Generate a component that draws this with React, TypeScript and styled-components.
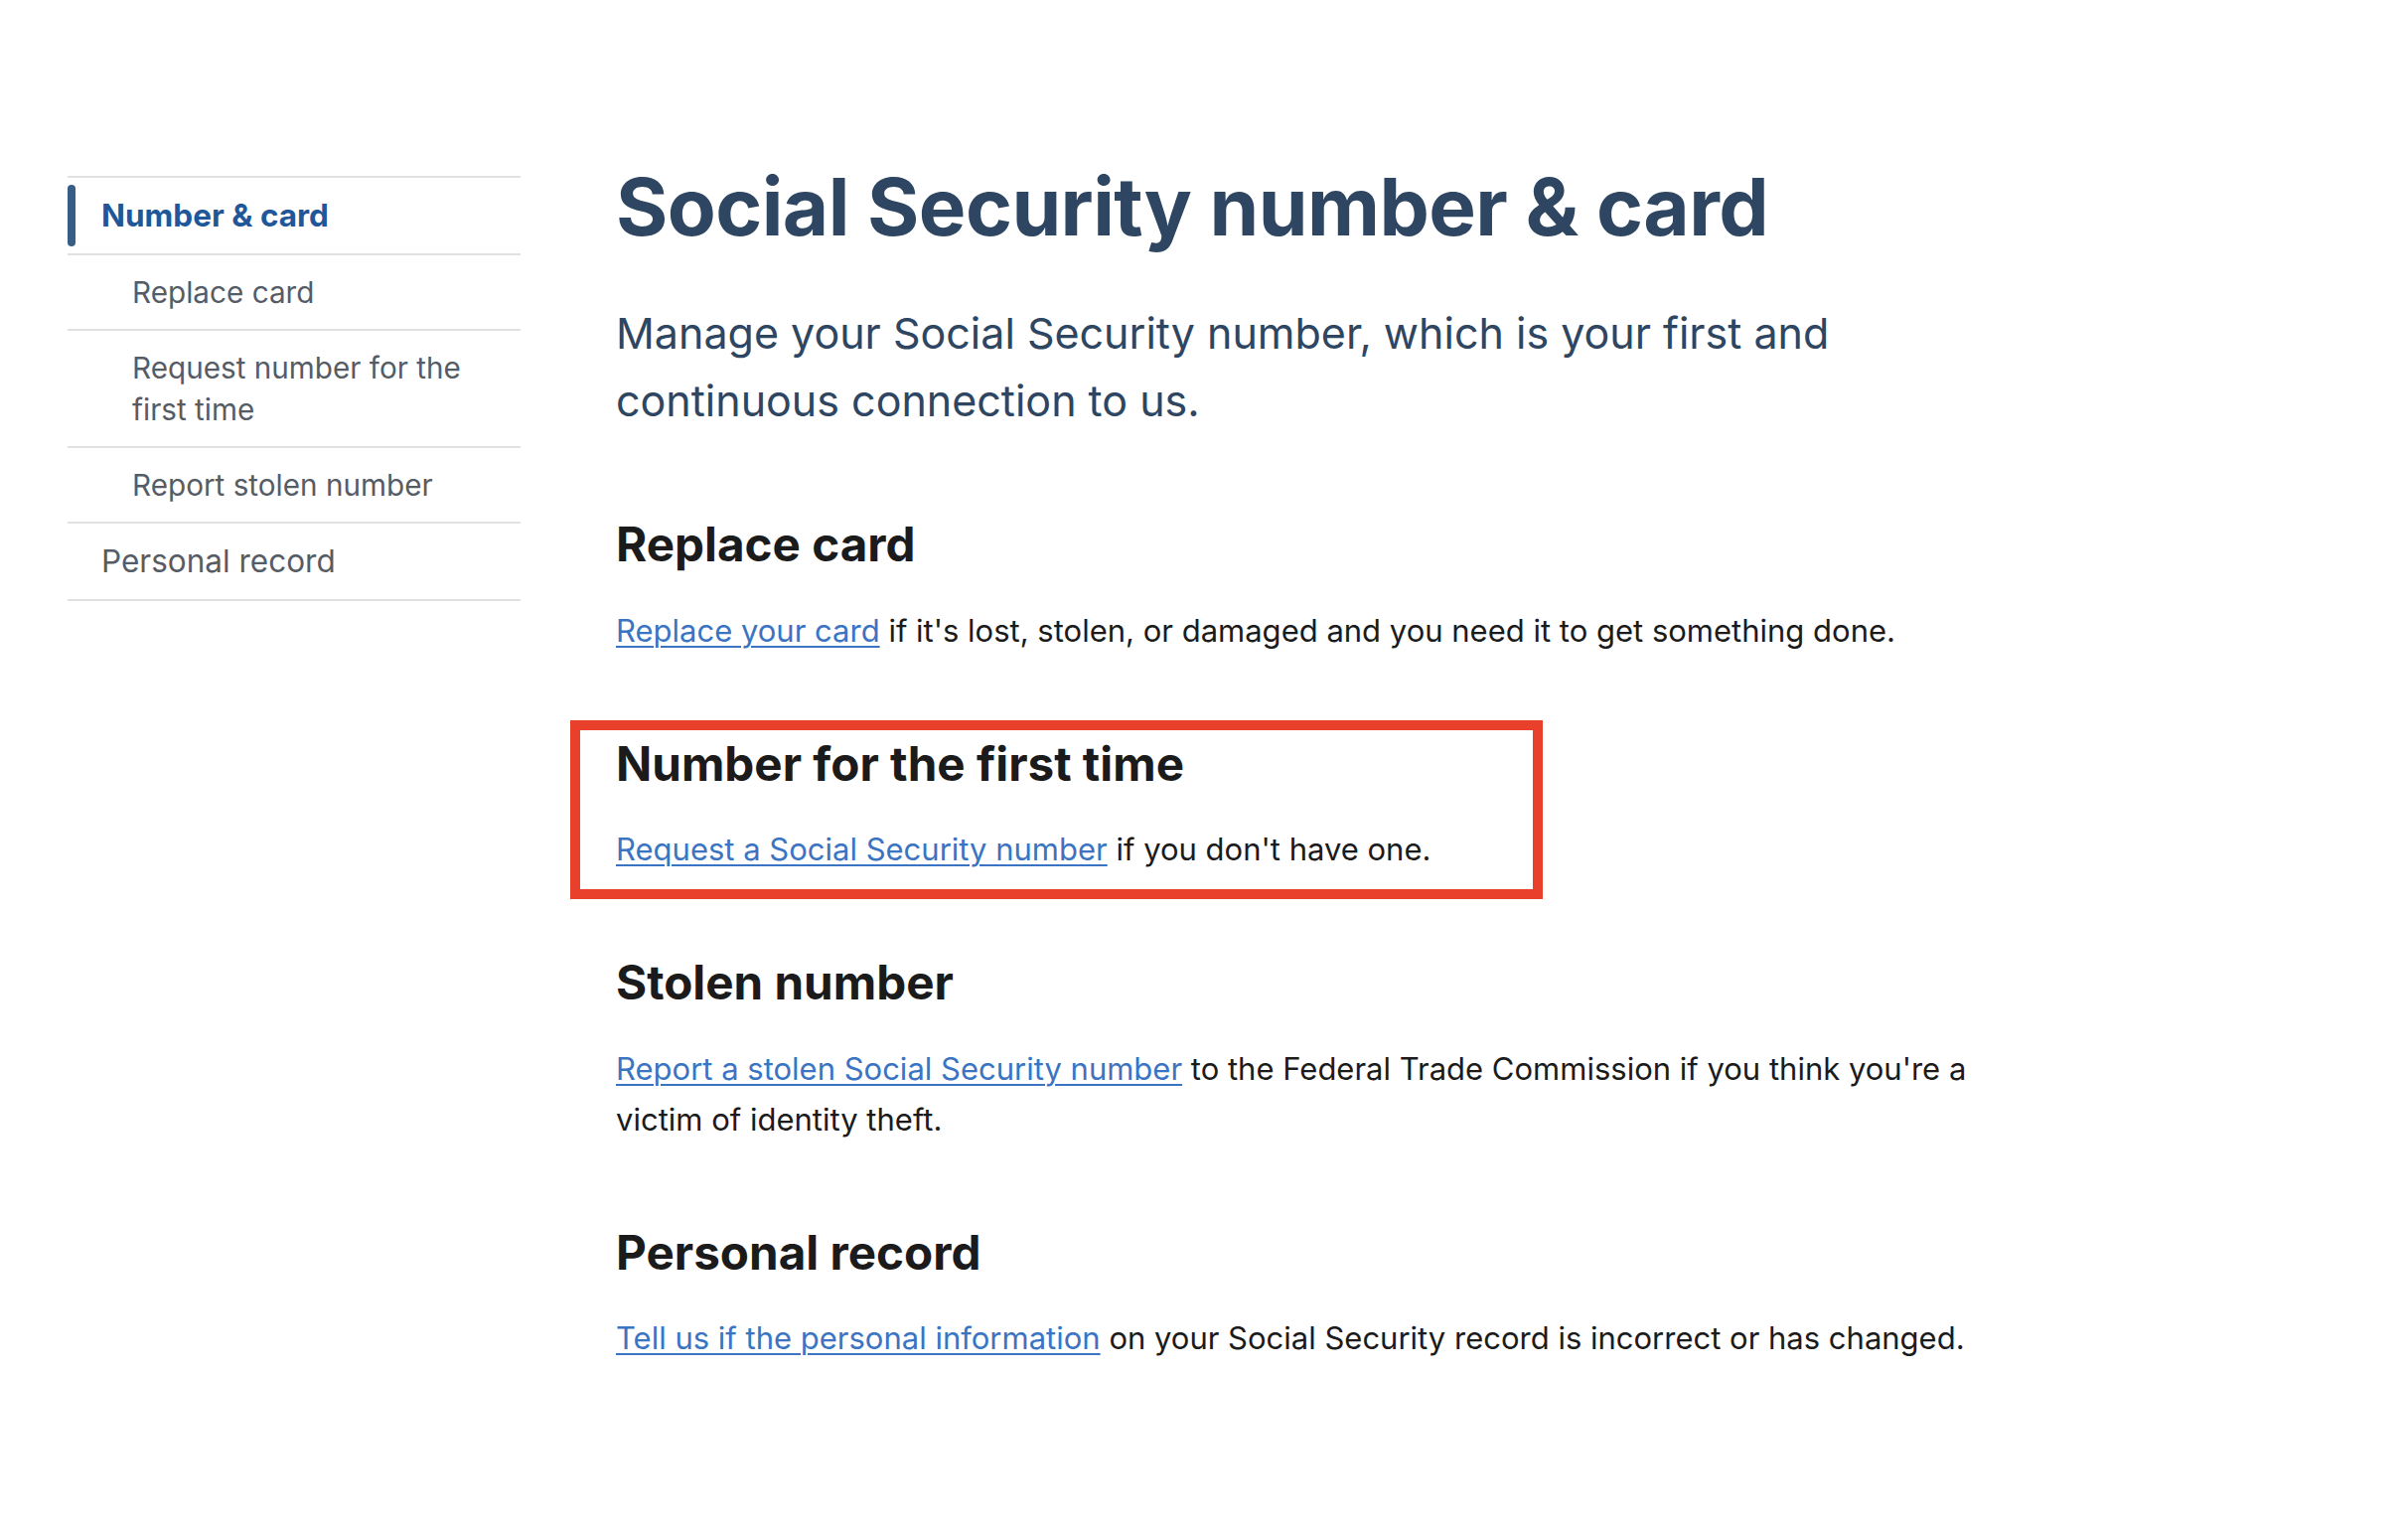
import React from 'react';
import styled, { createGlobalStyle } from 'styled-components';

const GlobalStyle = createGlobalStyle`
  html, body {
    margin: 0;
    padding: 0;
    background: #ffffff;
  }

  body {
    font-family: Inter, "Noto Sans", "Liberation Sans", sans-serif;
    color: #1b1b1b;
  }
`;

interface NavItemData {
  label: string;
  level: 1 | 2;
  current?: boolean;
}

interface SectionData {
  title: string;
  linkText: string;
  rest: string;
  highlighted?: boolean;
}

const navItems: NavItemData[] = [
  { label: 'Number & card', level: 1, current: true },
  { label: 'Replace card', level: 2 },
  { label: 'Request number for the first time', level: 2 },
  { label: 'Report stolen number', level: 2 },
  { label: 'Personal record', level: 1 },
];

const sections: SectionData[] = [
  {
    title: 'Replace card',
    linkText: 'Replace your card',
    rest: " if it's lost, stolen, or damaged and you need it to get something done.",
  },
  {
    title: 'Number for the first time',
    linkText: 'Request a Social Security number',
    rest: " if you don't have one.",
    highlighted: true,
  },
  {
    title: 'Stolen number',
    linkText: 'Report a stolen Social Security number',
    rest: " to the Federal Trade Commission if you think you're a victim of identity theft.",
  },
  {
    title: 'Personal record',
    linkText: 'Tell us if the personal information',
    rest: ' on your Social Security record is incorrect or has changed.',
  },
];

const Page = styled.div`
  display: flex;
  align-items: flex-start;
  gap: 96px;
  padding: 0 0 120px 68px;
  min-height: 1536px;
  box-sizing: border-box;
`;

const SideNav = styled.nav`
  flex: 0 0 456px;
  padding-top: 177px;
`;

const NavList = styled.ul`
  list-style: none;
  margin: 0;
  padding: 0;
  border-top: 2px solid #dfe1e2;
`;

const NavItem = styled.li<{ $level: 1 | 2; $current?: boolean }>`
  position: relative;
  border-bottom: 2px solid #dfe1e2;
  padding: 16px 24px 16px ${p => (p.$level === 1 ? '34px' : '65px')};
  font-size: ${p => (p.$level === 1 ? '31.5px' : '29.7px')};
  line-height: ${p => (p.$level === 1 ? '44px' : '42px')};
  font-weight: ${p => (p.$current ? 700 : 400)};
  color: ${p => (p.$current ? '#1f5799' : '#565c65')};

  ${p =>
    p.$current &&
    `
    &::before {
      content: '';
      position: absolute;
      left: 0;
      top: 7px;
      bottom: 7px;
      width: 8px;
      border-radius: 8px;
      background: #385d84;
    }
  `}
`;

const Main = styled.main`
  flex: 0 1 1400px;
  max-width: 1400px;
  padding-top: 160px;
`;

const Title = styled.h1`
  margin: 0 0 45px 0;
  font-size: 80px;
  line-height: 96px;
  font-weight: 700;
  color: #2e4661;
  letter-spacing: -0.6px;
`;

const Intro = styled.p`
  margin: 0 0 82px 0;
  max-width: 1300px;
  font-size: 43px;
  line-height: 68px;
  color: #2e4661;
`;

const Sections = styled.div`
  display: flex;
  flex-direction: column;
  gap: 80px;
`;

const Section = styled.section<{ $highlighted?: boolean }>`
  position: relative;

  ${p =>
    p.$highlighted &&
    `
    &::after {
      content: '';
      position: absolute;
      top: -15px;
      bottom: -25px;
      left: -46px;
      width: 979px;
      border: 10px solid #e8402a;
      box-sizing: border-box;
      pointer-events: none;
    }
  `}
`;

const SectionTitle = styled.h2`
  margin: 0 0 32px 0;
  font-size: 47.6px;
  line-height: 57.6px;
  font-weight: 700;
  color: #1b1b1b;
`;

const Body = styled.p`
  margin: 0;
  font-size: 31px;
  line-height: 51px;
  color: #1b1b1b;
`;

const TextLink = styled.a`
  color: #3a74c2;
  text-decoration: underline;
  text-decoration-thickness: 2px;
  text-underline-offset: 4px;
`;

export default function App() {
  return (
    <>
      <GlobalStyle />
      <Page>
        <SideNav aria-label="Secondary navigation">
          <NavList>
            {navItems.map(item => (
              <NavItem key={item.label} $level={item.level} $current={item.current}>
                {item.label}
              </NavItem>
            ))}
          </NavList>
        </SideNav>

        <Main>
          <Title>Social Security number &amp; card</Title>
          <Intro>
            Manage your Social Security number, which is your first and continuous
            connection to us.
          </Intro>

          <Sections>
            {sections.map(section => (
              <Section key={section.title} $highlighted={section.highlighted}>
                <SectionTitle>{section.title}</SectionTitle>
                <Body>
                  <TextLink href="#">{section.linkText}</TextLink>
                  {section.rest}
                </Body>
              </Section>
            ))}
          </Sections>
        </Main>
      </Page>
    </>
  );
}
